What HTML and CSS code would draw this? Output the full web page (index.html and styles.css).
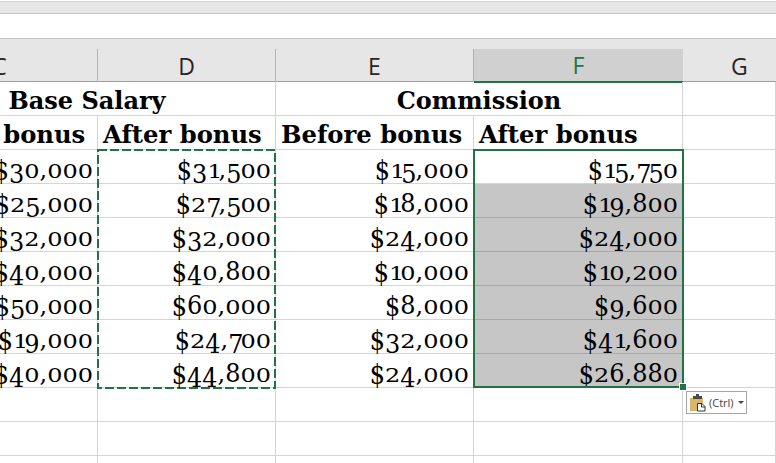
FILE: index.html
```html
<!DOCTYPE html>
<html lang="en">
<head>
<meta charset="utf-8">
<title>Paste result</title>
<link rel="stylesheet" href="styles.css">
</head>
<body>
<div class="app">
  <div class="ribbon-edge"></div>
  <div class="formula-bar"></div>
  <div class="col-heads">
    <div class="col-head first">C</div>
    <div class="col-head">D</div>
    <div class="col-head">E</div>
    <div class="col-head active">F</div>
    <div class="col-head last">G</div>
  </div>
  <div class="sheet">
    <div class="cells">
      <div class="cell title span2">Base Salary</div>
      <div class="cell title span2">Commission</div>
      <div class="cell"></div>

      <div class="cell head">Before bonus</div>
      <div class="cell head">After bonus</div>
      <div class="cell head">Before bonus</div>
      <div class="cell head">After bonus</div>
      <div class="cell"></div>

      <div class="cell num">$30,000</div><div class="cell num">$31,500</div><div class="cell num">$15,000</div><div class="cell num">$15,750</div><div class="cell"></div>
      <div class="cell num">$25,000</div><div class="cell num">$27,500</div><div class="cell num">$18,000</div><div class="cell num sel">$19,800</div><div class="cell"></div>
      <div class="cell num">$32,000</div><div class="cell num">$32,000</div><div class="cell num">$24,000</div><div class="cell num sel">$24,000</div><div class="cell"></div>
      <div class="cell num">$40,000</div><div class="cell num">$40,800</div><div class="cell num">$10,000</div><div class="cell num sel">$10,200</div><div class="cell"></div>
      <div class="cell num">$50,000</div><div class="cell num">$60,000</div><div class="cell num">$8,000</div><div class="cell num sel">$9,600</div><div class="cell"></div>
      <div class="cell num">$19,000</div><div class="cell num">$24,700</div><div class="cell num">$32,000</div><div class="cell num sel">$41,600</div><div class="cell"></div>
      <div class="cell num">$40,000</div><div class="cell num">$44,800</div><div class="cell num">$24,000</div><div class="cell num sel">$26,880</div><div class="cell"></div>

      <div class="cell"></div><div class="cell"></div><div class="cell"></div><div class="cell"></div><div class="cell"></div>
      <div class="cell"></div><div class="cell"></div><div class="cell"></div><div class="cell"></div><div class="cell"></div>
      <div class="cell"></div><div class="cell"></div><div class="cell"></div><div class="cell"></div><div class="cell"></div>
    </div>

    <div class="overlays">
      <div class="copy-range">
        <svg class="ants" width="180" height="240" viewBox="0 0 180 240"><rect x="1" y="1" width="177" height="238" fill="none" stroke="#217346" stroke-width="2" stroke-dasharray="9 3"/></svg>
      </div>
      <div class="paste-range"><span class="fill-handle"></span></div>
      <div class="paste-button">
        <svg class="clip" width="16" height="18" viewBox="0 0 16 18">
          <path d="M0 4h13v13H0z" fill="#dcb36a"/>
          <path d="M3 2h3V0h3v2h3v3H3z" fill="#4a4a4a"/>
          <path d="M7.500 9.500h4.500l3 3v4.500H7.500z" fill="#fff" stroke="#333" stroke-width="1"/>
          <path d="M11.500 9.500v3.500h3.500" fill="none" stroke="#333" stroke-width="1"/>
        </svg>
        <span class="ctrl">(Ctrl)</span>
        <span class="caret"></span>
      </div>
    </div>
  </div>
</div>
<script src="figures.js"></script>
</body>
</html>
```
FILE: figures.js
```js
// Old-style figures: wrap each digit so the stylesheet can set its height and drop.
document.querySelectorAll('.num').forEach(function (cell) {
  cell.innerHTML = cell.textContent.replace(/[$0-9]/g, function (ch) {
    return '<span class="fig ' + (ch === '$' ? 'fig-s' : 'fig-' + ch) + '">' + ch + '</span>';
  });
});
```
FILE: styles.css
```css
* { box-sizing: border-box; }
html, body { margin: 0; padding: 0; height: 100%; overflow: hidden; background: #fff; }
.app { width: 776px; height: 463px; overflow: hidden; }

.ribbon-edge {
  height: 13px;
  margin-top: 1px;
  border-top: 1px solid #d4d4d4;
  border-bottom: 1px solid #c6c6c6;
  background-color: #e6e6e6;
  background-image: radial-gradient(circle, #eeeeee 0.6px, transparent 0.7px);
  background-size: 6px 6px;
}
.formula-bar { height: 24px; background: #fff; }

.col-heads {
  height: 44px;
  margin-left: -101px;
  padding-top: 10px;
  display: grid;
  grid-template-columns: 199px 178px 198px 209px 1fr;
  border-top: 1px solid #c6c6c6;
  border-bottom: 1px solid #9e9e9e;
  background-color: #e6e6e6;
  background-image: radial-gradient(circle, #eeeeee 0.6px, transparent 0.7px);
  background-size: 6px 6px;
}
.col-head {
  display: flex;
  align-items: center;
  justify-content: center;
  border-right: 1px solid #b4b4b4;
  font: 23px "Open Sans", "Liberation Sans", sans-serif;
  color: #262626;
}
.col-head.first { padding-left: 3px; }
.col-head.last { border-right: 0; justify-content: flex-start; padding-left: 48px; }
.col-head.active {
  margin-bottom: -1px;
  border-right: 0;
  border-bottom: 2px solid #217346;
  background-color: #d0d0d0;
  color: #217346;
}

.sheet {
  display: grid;
  margin-left: -101px;
  grid-template-columns: 1fr;
  font-family: "DejaVu Serif", "Liberation Serif", serif;
  color: #000;
}
.cells, .overlays {
  grid-area: 1 / 1;
  display: grid;
  grid-template-columns: 199px 178px 198px 209px 1fr;
  grid-template-rows: repeat(12, 34px);
}
.cell {
  border-right: 1px solid #d4d4d4;
  border-bottom: 1px solid #d4d4d4;
  white-space: nowrap;
  min-width: 0;
}
.span2 { grid-column: span 2; }
.title {
  text-align: center;
  font-size: 24px;
  font-weight: 700;
  line-height: 38px;
}
.head {
  padding-left: 5px;
  font-size: 24.250px;
  font-weight: 700;
  line-height: 38px;
}
.num {
  padding-right: 4px;
  text-align: right;
  font-size: 24px;
  line-height: 40px;
}

.fig {
  display: inline-block;
  line-height: 1;
  transform-origin: 50% 85%;
}
.fig-0, .fig-2 { transform: scaleY(0.76); }
.fig-1 { transform: scaleY(0.76); letter-spacing: -4px; }
.fig-3, .fig-4, .fig-9 { transform: translateY(5px) scaleY(1.06); }
.fig-5 { transform: translateY(5px) scaleY(1.06); letter-spacing: -1px; }
.fig-7 { transform: translateY(5px) scaleY(1.06); letter-spacing: -3px; }
.fig-6, .fig-8 { transform: scaleY(1.08); }
.fig-s { transform: translateY(2px) scaleY(1.14); }

.sel {
  background-color: #c6c6c6;
  background-image: radial-gradient(circle, #cecece 0.6px, transparent 0.7px);
  background-size: 6px 6px;
  border-bottom-color: #a8a8a8;
  border-right-color: #c6c6c6;
}

.copy-range {
  grid-column: 2;
  grid-row: 3 / 10;
  margin: -1px 0 0 -1px;
}
.ants { display: block; }

.paste-range {
  grid-column: 4;
  grid-row: 3 / 10;
  margin: -1px -1px 0 -1px;
  border: 2px solid #217346;
  position: relative;
}
.fill-handle {
  position: absolute;
  right: -5px;
  bottom: -5px;
  width: 8px;
  height: 8px;
  background: #217346;
  border: 1px solid #fff;
}

.paste-button {
  grid-column: 5;
  grid-row: 10 / 11;
  align-self: start;
  justify-self: start;
  margin: 3px 0 0 3px;
  width: 61px;
  height: 23px;
  display: flex;
  align-items: center;
  gap: 3px;
  padding-left: 3px;
  background: #fff;
  border: 1px solid #a6a6a6;
  font: 11px "Open Sans", "Liberation Sans", sans-serif;
  color: #444;
}
.clip { flex: none; }
.caret {
  width: 0;
  height: 0;
  margin-left: 1px;
  border-left: 3px solid transparent;
  border-right: 3px solid transparent;
  border-top: 3px solid #444;
}
```
